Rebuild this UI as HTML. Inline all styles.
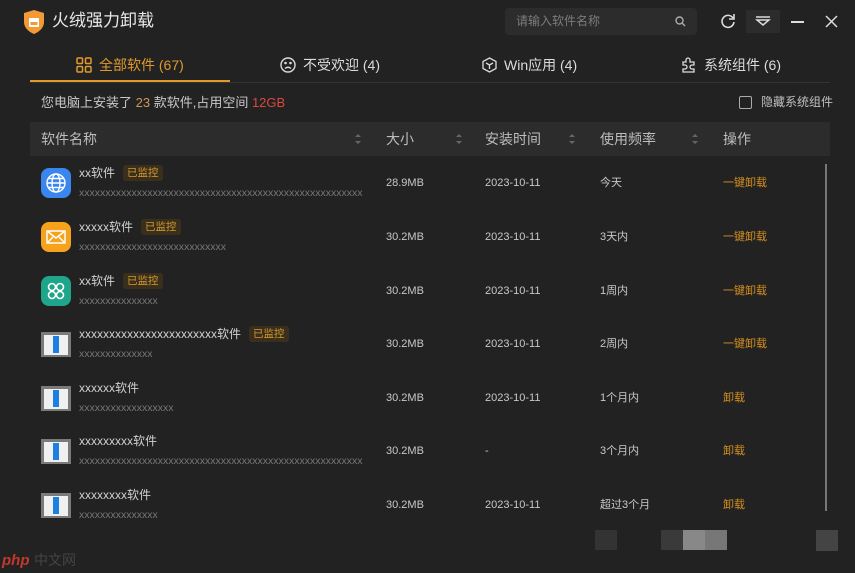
<!DOCTYPE html>
<html><head><meta charset="utf-8"><style>
*{margin:0;padding:0;box-sizing:border-box}
body{width:855px;height:573px;background:#222222;font-family:"Liberation Sans","Noto Sans CJK SC",sans-serif;color:#d8d8d8;position:relative;overflow:hidden}
.a{position:absolute;white-space:nowrap;line-height:1.2}
.title{left:52px;top:10px;font-size:17px;color:#e8e8e8;line-height:22px}
.search{left:505px;top:8px;width:192px;height:27px;background:#2c2c2c;border-radius:4px}
.search span{position:absolute;left:11px;top:6px;font-size:12px;color:#7c7c7c;line-height:15px}
.tab{top:55px;font-size:14px;color:#dcdcdc;display:flex;align-items:center;gap:7px;line-height:20px}
.hdr{left:30px;top:122px;width:800px;height:34px;background:#2c2c2c}
.hdr span{position:absolute;top:8px;font-size:14px;color:#bdbdbd;line-height:18px}
.sort{position:absolute;top:11px;width:6px;height:12px}
.row{position:absolute;left:0;width:830px;height:54px}
.nm{position:absolute;left:79px;top:9px;font-size:12px;line-height:16px;color:#d0d0d0;display:flex;align-items:center}
.tag{margin-left:8px;background:#3a2f1c;color:#d49a2a;font-size:10.5px;line-height:14px;padding:1px 4px;border-radius:3px}
.sub{position:absolute;left:79px;top:30px;font-size:10.5px;line-height:14px;color:#777;max-width:284px;overflow:hidden;text-overflow:ellipsis;white-space:nowrap}
.c{position:absolute;top:19px;font-size:11px;line-height:16px;height:16px;color:#c8c8c8;white-space:nowrap}
.op{position:absolute;left:723px;top:19px;font-size:11px;line-height:16px;color:#d4901e}
.ic{position:absolute;left:41px;top:12px;width:30px;height:30px;border-radius:8px}
.win{position:absolute;left:41px;top:15px;width:30px;height:25px;background:#7a7a7a;padding:3px 3px 2px}
.win i{display:block;width:100%;height:100%;background:#f0f0f0;position:relative}
.win i:after{content:"";position:absolute;left:9px;top:1px;width:6px;height:17px;background:#1e7fe0}
</style></head><body>
<svg class="a" style="left:22px;top:9px" width="24" height="26" viewBox="0 0 24 26"><path d="M12 1 L22 4 V13 C22 19 17 23 12 25 C7 23 2 19 2 13 V4 Z" fill="#f29a35"/><rect x="7" y="9" width="10" height="9" fill="#fff" rx="1"/><rect x="8.5" y="13" width="7" height="3" fill="#f29a35"/></svg>
<div class="a title">火绒强力卸载</div>
<div class="a search"><span>请输入软件名称</span><svg style="position:absolute;right:11px;top:8px" width="11" height="11" viewBox="0 0 11 11"><circle cx="4.5" cy="4.5" r="3.5" fill="none" stroke="#aaa" stroke-width="1.4"/><path d="M7 7L10 10" stroke="#aaa" stroke-width="1.4"/></svg></div>
<svg class="a" style="left:720px;top:13px" width="16" height="16" viewBox="0 0 16 16"><path d="M13 5A6 6 0 1 0 14 9" fill="none" stroke="#ddd" stroke-width="1.6"/><path d="M14 1V6H9" fill="none" stroke="#ddd" stroke-width="1.6"/></svg>
<div class="a" style="left:746px;top:10px;width:34px;height:23px;background:#2c2c2c"></div>
<svg class="a" style="left:755px;top:15px" width="16" height="12" viewBox="0 0 16 12"><path d="M1 2H15" stroke="#ddd" stroke-width="1.5"/><path d="M2 5H14L8 10Z" fill="none" stroke="#ddd" stroke-width="1.5"/></svg>
<div class="a" style="left:791px;top:21px;width:13px;height:1.6px;background:#ddd"></div>
<svg class="a" style="left:825px;top:15px" width="13" height="13" viewBox="0 0 13 13"><path d="M1 1L12 12M12 1L1 12" stroke="#ddd" stroke-width="1.5"/></svg>

<div class="a tab" style="left:76px;color:#e09a2c"><svg width="16" height="16" viewBox="0 0 16 16" fill="none" stroke="#e09a2c" stroke-width="1.5"><rect x="1" y="1" width="5.5" height="5.5" rx="1"/><rect x="9.5" y="1" width="5.5" height="5.5" rx="1"/><rect x="1" y="9.5" width="5.5" height="5.5" rx="1"/><rect x="9.5" y="9.5" width="5.5" height="5.5" rx="1"/></svg>全部软件 (67)</div>
<div class="a tab" style="left:280px"><svg width="16" height="16" viewBox="0 0 16 16" fill="none" stroke="#ddd" stroke-width="1.4"><circle cx="8" cy="8" r="7"/><circle cx="5.5" cy="6" r=".6" fill="#ddd"/><circle cx="10.5" cy="6" r=".6" fill="#ddd"/><path d="M5 11.5Q8 9 11 11.5"/></svg>不受欢迎 (4)</div>
<div class="a tab" style="left:482px"><svg width="15" height="16" viewBox="0 0 15 16" fill="none" stroke="#ddd" stroke-width="1.3"><path d="M7.5 1L14 4.5V11.5L7.5 15L1 11.5V4.5Z"/><path d="M4 6L7.5 8L11 6M7.5 8V12"/></svg>Win应用 (4)</div>
<div class="a tab" style="left:681px"><svg width="16" height="16" viewBox="0 0 16 16" fill="none" stroke="#ddd" stroke-width="1.3"><path d="M2 5H5V3A2 2 0 0 1 9 3V5H13V8H11A2 2 0 0 0 11 12H13V15H2V12H4A2 2 0 0 0 4 8H2Z"/></svg>系统组件 (6)</div>
<div class="a" style="left:30px;top:82px;width:800px;height:1px;background:#333"></div>
<div class="a" style="left:30px;top:80px;width:200px;height:2px;background:#e09a2c"></div>

<div class="a" style="left:41px;top:94px;font-size:13px;line-height:17px;color:#c8c8c8">您电脑上安装了 <span style="color:#c79a54">23</span> 款软件,占用空间 <span style="color:#d9473e">12GB</span></div>
<div class="a" style="left:739px;top:96px;width:13px;height:13px;border:1.5px solid #aaa;border-radius:2px"></div>
<div class="a" style="left:761px;top:94px;font-size:12px;line-height:16px;color:#c0c0c0">隐藏系统组件</div>

<div class="a hdr">
<span style="left:11px">软件名称</span><span style="left:356px">大小</span><span style="left:455px">安装时间</span><span style="left:570px">使用频率</span><span style="left:693px">操作</span>
<svg class="sort" style="left:325px" viewBox="0 0 6 12"><path d="M0 4L3 1L6 4ZM0 8L3 11L6 8Z" fill="#666"/></svg>
<svg class="sort" style="left:426px" viewBox="0 0 6 12"><path d="M0 4L3 1L6 4ZM0 8L3 11L6 8Z" fill="#666"/></svg>
<svg class="sort" style="left:539px" viewBox="0 0 6 12"><path d="M0 4L3 1L6 4ZM0 8L3 11L6 8Z" fill="#666"/></svg>
<svg class="sort" style="left:662px" viewBox="0 0 6 12"><path d="M0 4L3 1L6 4ZM0 8L3 11L6 8Z" fill="#666"/></svg>
</div>

<div class="row" style="top:156px">
<div class="ic" style="background:#3a86f0"><svg width="30" height="30" viewBox="0 0 30 30" fill="none" stroke="#fff" stroke-width="1.4"><circle cx="15" cy="15" r="9"/><ellipse cx="15" cy="15" rx="4" ry="9"/><path d="M6 15H24M7.5 10.5H22.5M7.5 19.5H22.5"/></svg></div>
<div class="nm">xx软件<span class="tag">已监控</span></div><div class="sub">xxxxxxxxxxxxxxxxxxxxxxxxxxxxxxxxxxxxxxxxxxxxxxxxxxxxxx</div>
<div class="c" style="left:386px">28.9MB</div><div class="c" style="left:485px">2023-10-11</div><div class="c" style="left:600px">今天</div><div class="op">一键卸载</div></div>
<div class="row" style="top:210px">
<div class="ic" style="background:#f7a21d"><svg width="30" height="30" viewBox="0 0 30 30" fill="none" stroke="#fff" stroke-width="1.5"><rect x="6" y="9" width="18" height="12"/><path d="M6 9L15 16L24 9M6 21L12 15M24 21L18 15"/></svg></div>
<div class="nm">xxxxx软件<span class="tag">已监控</span></div><div class="sub">xxxxxxxxxxxxxxxxxxxxxxxxxxxx</div>
<div class="c" style="left:386px">30.2MB</div><div class="c" style="left:485px">2023-10-11</div><div class="c" style="left:600px">3天内</div><div class="op">一键卸载</div></div>
<div class="row" style="top:264px">
<div class="ic" style="background:#1fa58a"><svg width="30" height="30" viewBox="0 0 30 30" fill="none" stroke="#fff" stroke-width="1.6"><circle cx="11" cy="11" r="3.5"/><circle cx="19" cy="11" r="3.5"/><circle cx="11" cy="19" r="3.5"/><circle cx="19" cy="19" r="3.5"/></svg></div>
<div class="nm">xx软件<span class="tag">已监控</span></div><div class="sub">xxxxxxxxxxxxxxx</div>
<div class="c" style="left:386px">30.2MB</div><div class="c" style="left:485px">2023-10-11</div><div class="c" style="left:600px">1周内</div><div class="op">一键卸载</div></div>
<div class="row" style="top:317px">
<div class="win"><i></i></div>
<div class="nm">xxxxxxxxxxxxxxxxxxxxxxx软件<span class="tag">已监控</span></div><div class="sub">xxxxxxxxxxxxxx</div>
<div class="c" style="left:386px">30.2MB</div><div class="c" style="left:485px">2023-10-11</div><div class="c" style="left:600px">2周内</div><div class="op">一键卸载</div></div>
<div class="row" style="top:371px">
<div class="win"><i></i></div>
<div class="nm">xxxxxx软件</div><div class="sub">xxxxxxxxxxxxxxxxxx</div>
<div class="c" style="left:386px">30.2MB</div><div class="c" style="left:485px">2023-10-11</div><div class="c" style="left:600px">1个月内</div><div class="op">卸载</div></div>
<div class="row" style="top:424px">
<div class="win"><i></i></div>
<div class="nm">xxxxxxxxx软件</div><div class="sub">xxxxxxxxxxxxxxxxxxxxxxxxxxxxxxxxxxxxxxxxxxxxxxxxxxxxxx</div>
<div class="c" style="left:386px">30.2MB</div><div class="c" style="left:485px">-</div><div class="c" style="left:600px">3个月内</div><div class="op">卸载</div></div>
<div class="row" style="top:478px">
<div class="win"><i></i></div>
<div class="nm">xxxxxxxx软件</div><div class="sub">xxxxxxxxxxxxxxx</div>
<div class="c" style="left:386px">30.2MB</div><div class="c" style="left:485px">2023-10-11</div><div class="c" style="left:600px">超过3个月</div><div class="op">卸载</div></div>

<div class="a" style="left:825px;top:164px;width:2px;height:347px;background:#777"></div>
<div class="a" style="left:595px;top:530px;width:22px;height:20px;background:#333"></div>
<div class="a" style="left:661px;top:530px;width:22px;height:20px;background:#3a3a3a"></div>
<div class="a" style="left:683px;top:530px;width:22px;height:20px;background:#888"></div>
<div class="a" style="left:705px;top:530px;width:22px;height:20px;background:#777"></div>
<div class="a" style="left:816px;top:530px;width:22px;height:21px;background:#444"></div>
<div class="a" style="left:2px;top:552px;font-size:15px;color:#c0392b;font-style:italic;font-weight:bold">php</div>
<div class="a" style="left:34px;top:552px;font-size:14px;color:#444">中文网</div>
</body></html>
